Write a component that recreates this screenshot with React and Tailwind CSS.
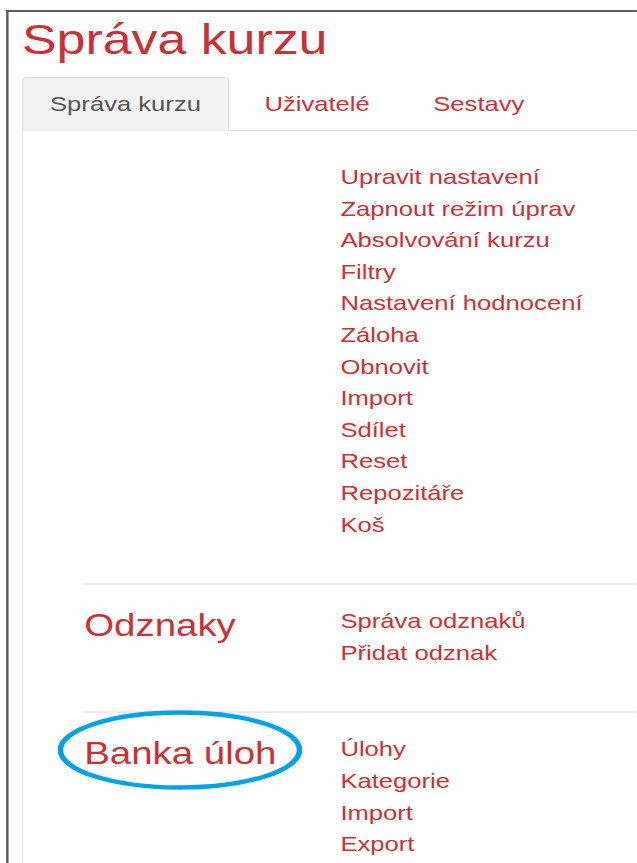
import React from "react";

const sections = [
  {
    title: null,
    links: [
      "Upravit nastavení",
      "Zapnout režim úprav",
      "Absolvování kurzu",
      "Filtry",
      "Nastavení hodnocení",
      "Záloha",
      "Obnovit",
      "Import",
      "Sdílet",
      "Reset",
      "Repozitáře",
      "Koš",
    ],
  },
  { title: "Odznaky", links: ["Správa odznaků", "Přidat odznak"] },
  { title: "Banka úloh", links: ["Úlohy", "Kategorie", "Import", "Export"], circled: true },
];

const tabs = ["Správa kurzu", "Uživatelé", "Sestavy"];

function Section({ section, first }) {
  return (
    <div
      className={`relative ml-[50px] grid grid-cols-[210px_1fr] pb-[43px] ${
        first ? "pt-[30px]" : "border-t-2 border-[#e9e9e9] pt-[20px]"
      }`}
    >
      <div>
        {section.title && (
          <h2 className="text-[31.5px] leading-[40px] text-[#cc2f36]">{section.title}</h2>
        )}
      </div>
      <ul>
        {section.links.map((link) => (
          <li key={link} className="text-[21px] leading-[31.6px]">
            <a href="#" className="text-[#cc2f36]">
              {link}
            </a>
          </li>
        ))}
      </ul>

      {/* hand-drawn highlight ring */}
      {section.circled && (
        <svg
          className="pointer-events-none absolute left-[-22px] top-[-3px] h-[80px] w-[201px]"
          viewBox="0 0 201 80"
        >
          <ellipse cx="100.5" cy="40" rx="98" ry="37.5" fill="none" stroke="#00a2e8" strokeWidth="4.5" />
        </svg>
      )}
    </div>
  );
}

export default function App() {
  return (
    <div className="h-[863px] w-[637px] overflow-hidden bg-white">
      <div className="w-[522px] origin-top-left scale-x-[1.22] font-['Liberation_Sans',Arial,sans-serif]">
        <div className="ml-[5px] mt-[10px] border-l-2 border-t-2 border-[#5c5c5c] pl-[11px]">
          <h1 className="mt-[7px] text-[42.5px] leading-[42px] text-[#cc2f36]">Správa kurzu</h1>

          {/* Tabs */}
          <div className="mt-[16px] flex border-b border-[#dddddd]">
            {tabs.map((tab, i) => (
              <div
                key={tab}
                className={`-mb-px mr-[6px] border px-[22px] py-[16px] text-[21px] leading-[20px] ${
                  i === 0
                    ? "rounded-t-[4px] border-[#dddddd] border-b-transparent bg-[#f2f2f2] text-[#555555]"
                    : "border-transparent text-[#cc2f36]"
                }`}
              >
                {tab}
              </div>
            ))}
          </div>

          {/* Tab content */}
          <div className="border-l border-[#e6e6e6]">
            {sections.map((section, i) => (
              <Section key={i} section={section} first={i === 0} />
            ))}
          </div>
        </div>
      </div>
    </div>
  );
}
